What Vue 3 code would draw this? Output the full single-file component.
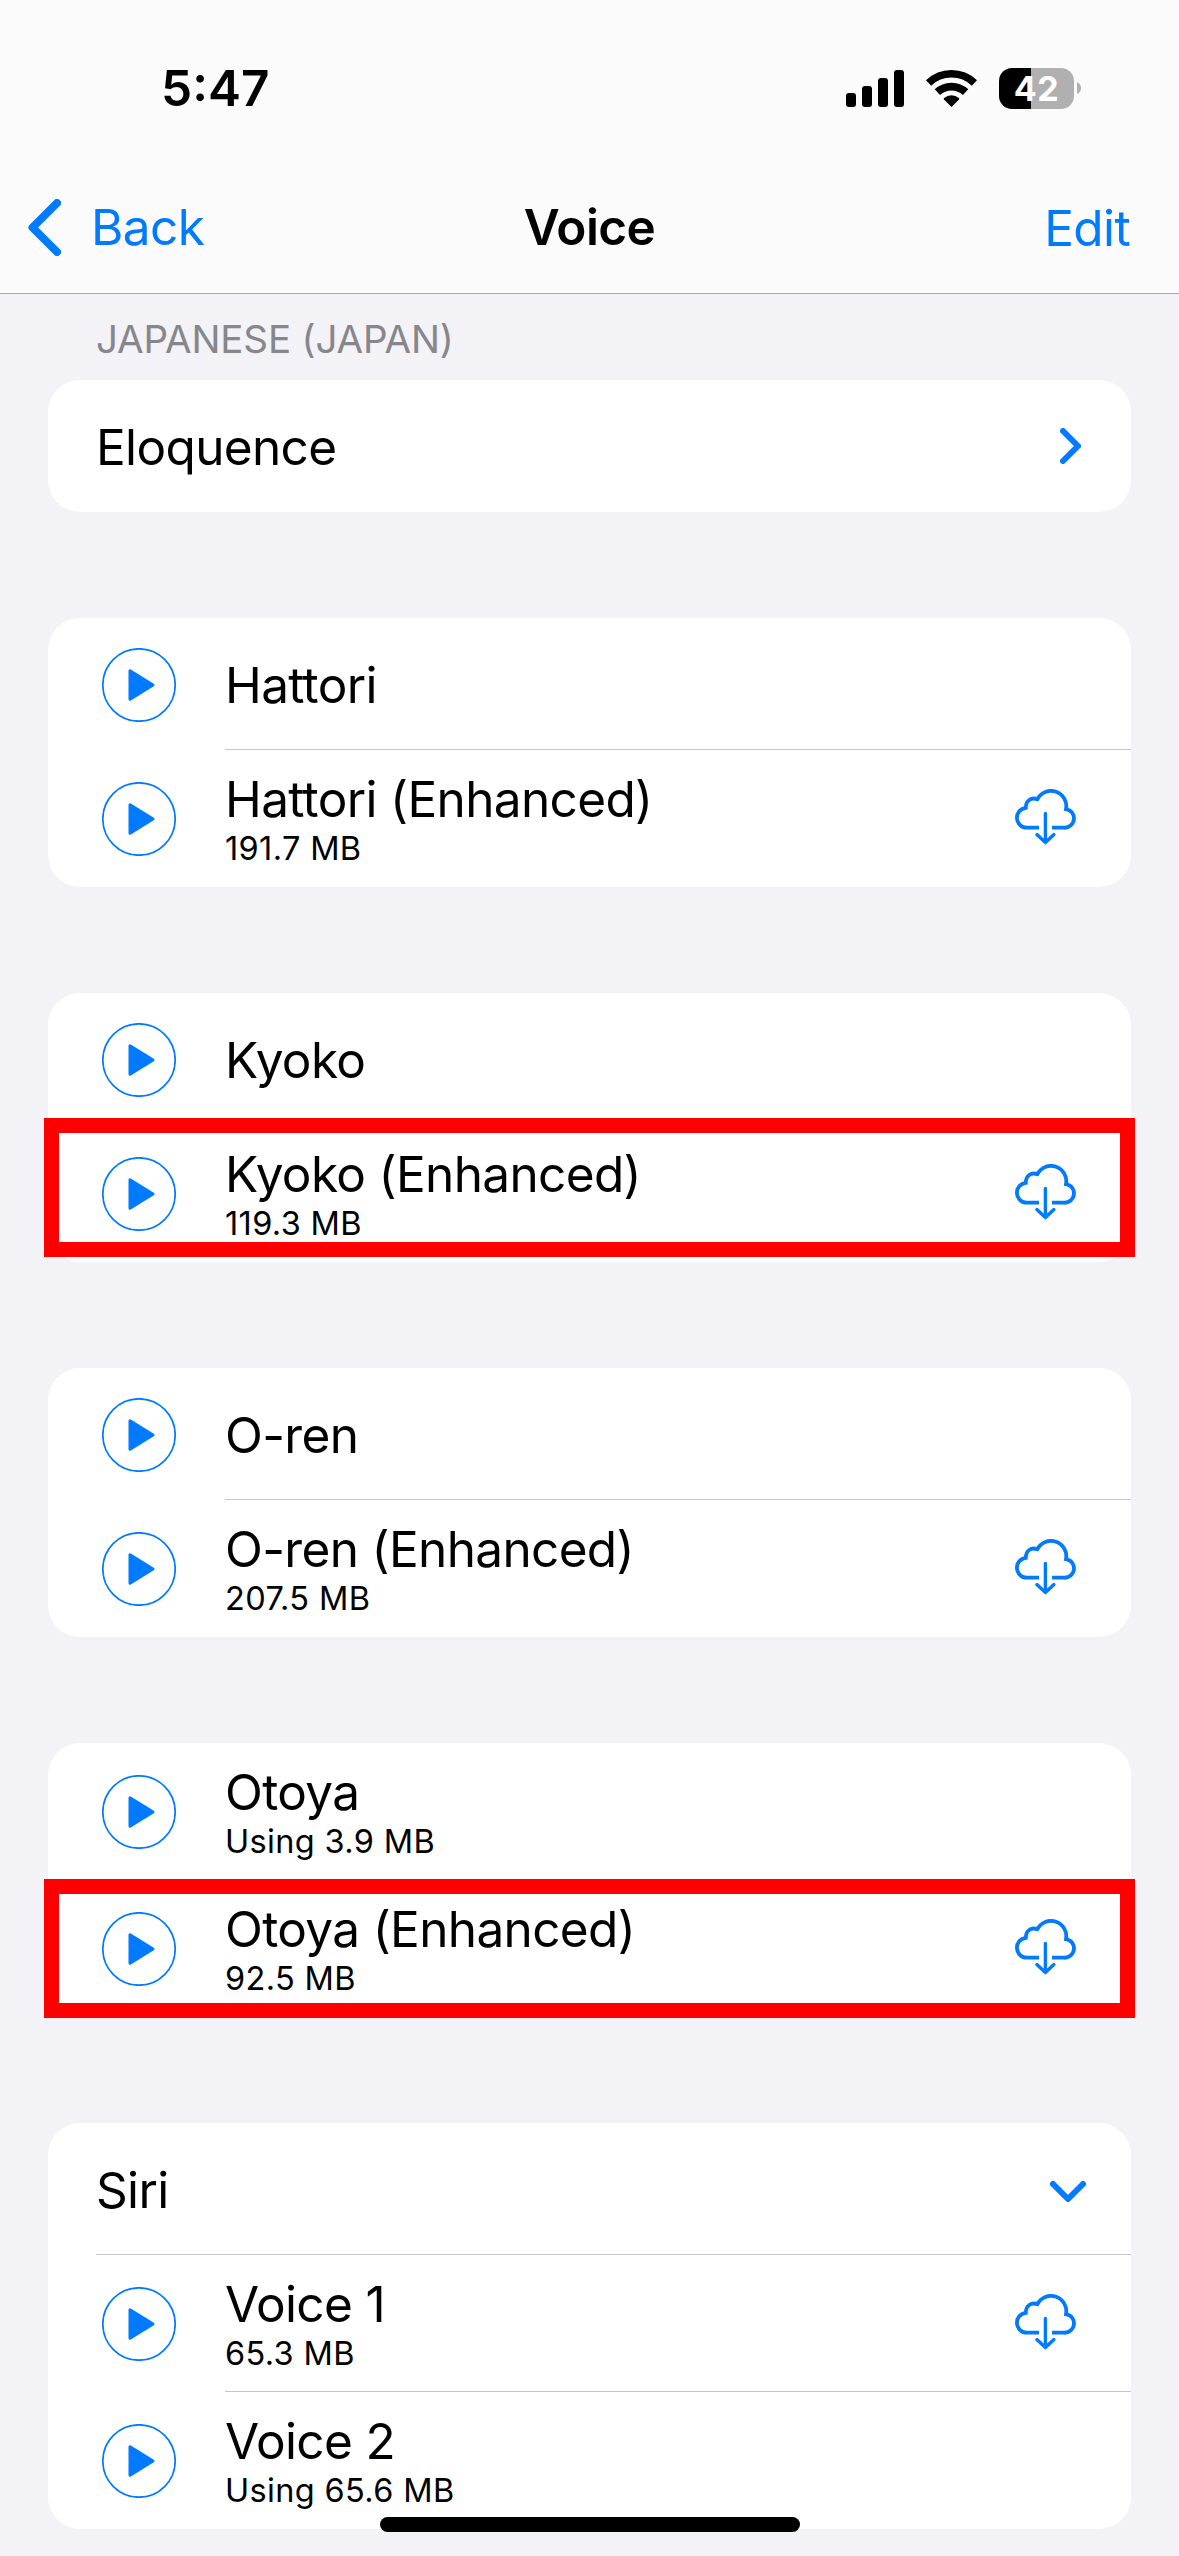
<template>
  <div class="screen">
    <header class="header">
      <div class="status-bar">
        <div class="time">5:47</div>
        <div class="status-icons">
          <svg class="signal" viewBox="0 0 58 37">
            <rect x="0" y="23" width="10" height="14" rx="3" />
            <rect x="16" y="16" width="10" height="21" rx="3" />
            <rect x="32" y="8" width="10" height="29" rx="3" />
            <rect x="48" y="0" width="10" height="37" rx="3" />
          </svg>
          <svg class="wifi" viewBox="0 0 51 37">
            <path d="M2.6 13a33.2 33.2 0 0 1 45.8 0" stroke-width="7.5" />
            <path d="M11.4 22.2a20.5 20.5 0 0 1 28.2 0" stroke-width="7.8" />
            <path class="wedge" d="M25.5 37l-7.5-7.6q-.6-.8.2-1.5a11.5 11.5 0 0 1 14.6 0q.8.7.2 1.5z" />
          </svg>
          <div class="battery">
            <div class="battery-body"><span>42</span></div>
            <svg class="battery-tip" viewBox="0 0 4 12"><path d="M0 0q4 2 4 6t-4 6z" /></svg>
          </div>
        </div>
      </div>
      <nav class="nav-bar">
        <div class="back">
          <svg viewBox="0 0 33 57"><path d="M29 4L4.5 28.5L29 53" /></svg>
          <span>Back</span>
        </div>
        <div class="title">Voice</div>
        <div class="edit">Edit</div>
      </nav>
    </header>

    <div class="section-title">JAPANESE (JAPAN)</div>

    <div class="groups">
      <div v-for="(group, i) in groups" :key="i" class="card">
        <div
          v-for="row in group"
          :key="row.name"
          class="row"
          :class="{ tall: row.size, plain: row.icon }"
        >
          <svg v-if="!row.icon" class="play" viewBox="0 0 74 74">
            <circle cx="37" cy="37" r="36.2" />
            <path d="M28 22.8v28.4L51 37z" />
          </svg>
          <div class="content">
            <div class="info">
              <div class="name">{{ row.name }}</div>
              <div v-if="row.size" class="size">{{ row.size }}</div>
            </div>
            <svg v-if="row.icon === 'right'" class="chevron-right" viewBox="0 0 21 36">
              <path d="M3 3L18 18L3 33" />
            </svg>
            <svg v-if="row.icon === 'down'" class="chevron-down" viewBox="0 0 36 21">
              <path d="M3 3L18 18L33 3" />
            </svg>
            <svg v-if="row.download" class="cloud" viewBox="0 0 61 56">
              <path d="M24 38.7H12A9.98 9.98 0 0 1 10.8 18.8C10.8 11.5 16 8 22.4 10.2A15.3 15.3 0 0 1 51 20.2A9.31 9.31 0 0 1 49 38.7H37" />
              <path class="arrow" d="M30.4 24.5V53.4M21.9 45.6L30.4 53.6L38.9 45.6" />
            </svg>
          </div>
          <div v-if="row.mark" class="mark" :class="row.mark"></div>
        </div>
      </div>
    </div>

    <div class="home-indicator"></div>
  </div>
</template>

<script setup>
const groups = [
  [{ name: 'Eloquence', icon: 'right' }],
  [
    { name: 'Hattori' },
    { name: 'Hattori (Enhanced)', size: '191.7 MB', download: true }
  ],
  [
    { name: 'Kyoko' },
    { name: 'Kyoko (Enhanced)', size: '119.3 MB', download: true, mark: 'raised' }
  ],
  [
    { name: 'O-ren' },
    { name: 'O-ren (Enhanced)', size: '207.5 MB', download: true }
  ],
  [
    { name: 'Otoya', size: 'Using 3.9 MB' },
    { name: 'Otoya (Enhanced)', size: '92.5 MB', download: true, mark: 'level' }
  ],
  [
    { name: 'Siri', icon: 'down' },
    { name: 'Voice 1', size: '65.3 MB', download: true },
    { name: 'Voice 2', size: 'Using 65.6 MB' }
  ]
];
</script>

<style>
body { margin: 0; background: #f2f2f7; }
</style>

<style scoped>
.screen {
  position: relative;
  width: 1179px;
  height: 2556px;
  overflow: hidden;
  background: #f2f2f7;
  font-family: Inter, "Liberation Sans", sans-serif;
  font-size: 49.5px;
  color: #000;
}

svg { display: block; flex-shrink: 0; }

.header {
  box-sizing: border-box;
  height: 294px;
  background: #fbfbfc;
  border-bottom: 1px solid #a9a9ab;
}

.status-bar {
  display: flex;
  justify-content: space-between;
  align-items: center;
  height: 176px;
  padding: 0 98px 0 161px;
}

.time { font-weight: 600; }

.status-icons { display: flex; align-items: center; }
.signal { width: 58px; height: 37px; margin-right: 22px; }
.wifi { width: 51px; height: 37px; margin-right: 22px; }
.wifi path { fill: none; stroke: #000; }
.wifi .wedge { fill: #000; stroke: none; }

.battery { display: flex; align-items: center; gap: 3px; }
.battery-body {
  display: flex;
  align-items: center;
  justify-content: center;
  width: 75px;
  height: 41px;
  border-radius: 13px;
  background: linear-gradient(to right, #000 32px, #b0b0b1 32px);
  color: #fff;
  font-size: 34px;
  font-weight: 650;
  letter-spacing: 0.5px;
}
.battery-tip { width: 4px; height: 12px; fill: #b0b0b1; }

.nav-bar {
  display: grid;
  grid-template-columns: 1fr auto 1fr;
  align-items: center;
  height: 102px;
  padding: 0 49px 0 28px;
  letter-spacing: -0.6px;
}
.back { display: flex; align-items: center; gap: 30px; color: #007aff; }
.back svg { width: 33px; height: 57px; }
.back path { fill: none; stroke: #007aff; stroke-width: 8; stroke-linecap: round; stroke-linejoin: round; }
.title { font-weight: 600; margin-left: 21px; }
.edit { justify-self: end; padding-top: 2px; color: #007aff; }

.section-title {
  height: 86px;
  padding-left: 96px;
  line-height: 90px;
  font-size: 38.5px;
  letter-spacing: -0.15px;
  color: #86868b;
}

.groups { display: flex; flex-direction: column; gap: 106px; padding: 0 48px; }
.card { background: #fff; border-radius: 32px; }

.row { position: relative; display: flex; align-items: center; height: 132px; padding-left: 54px; }
.row.tall { height: 137px; }
.row.plain { padding-left: 48px; }

.play { width: 74px; height: 74px; margin-top: 2px; margin-right: 49px; }
.tall .play { margin-top: 0; }
.play circle { fill: none; stroke: #007aff; stroke-width: 1.7; }
.play path { fill: #007aff; stroke: #007aff; stroke-width: 3; stroke-linejoin: round; }

.content {
  display: flex;
  flex: 1;
  align-items: center;
  box-sizing: border-box;
  height: 100%;
  padding-right: 55px;
  border-bottom: 1px solid #c6c6c8;
}
.row:last-child .content { border-bottom-color: transparent; }

.info { flex: 1; min-width: 0; padding-top: 2px; }
.name { line-height: 60px; letter-spacing: -0.65px; white-space: nowrap; }
.size { line-height: 40px; font-size: 32.5px; letter-spacing: 0.35px; }

.chevron-right { width: 21px; height: 36px; margin-right: -5px; }
.chevron-down { width: 36px; height: 21px; margin-top: 6px; margin-right: -10px; }
.chevron-right path,
.chevron-down path { fill: none; stroke: #007aff; stroke-width: 6; stroke-linecap: round; stroke-linejoin: round; }

.cloud { width: 61px; height: 56px; margin-top: -2px; }
.cloud path { fill: none; stroke: #007aff; stroke-width: 3.8; }
.cloud .arrow { stroke-width: 3.4; stroke-linecap: round; stroke-linejoin: round; }

/* red frame drawn over a highlighted row */
.mark { position: absolute; left: -4px; right: -4px; border: 15px solid #f00; }
.mark.raised { top: -7px; bottom: 5px; }
.mark.level { top: -1px; bottom: -1px; }

.home-indicator {
  position: absolute;
  left: 380px;
  bottom: 24px;
  width: 420px;
  height: 15px;
  border-radius: 8px;
  background: #000;
}
</style>
